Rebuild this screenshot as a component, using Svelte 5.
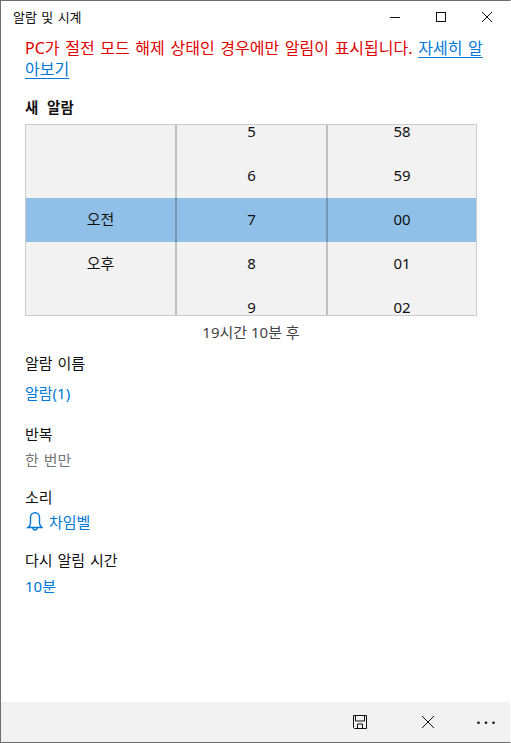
<script>
	const columns = [
		{name: 'ampm', items: ['', '', '오전', '오후', '']},
		{name: 'hour', items: ['5', '6', '7', '8', '9']},
		{name: 'minute', items: ['58', '59', '00', '01', '02']}
	]
</script>

<div class="window">
	<header class="titlebar">
		<span class="title">알람 및 시계</span>
		<div class="controls">
			<button aria-label="최소화">
				<svg width="10" height="10" viewBox="0 0 10 10"><path d="M0 5.5h10" stroke="#111" fill="none"/></svg>
			</button>
			<button aria-label="최대화">
				<svg width="10" height="10" viewBox="0 0 10 10"><rect x=".5" y=".5" width="9" height="9" stroke="#111" fill="none"/></svg>
			</button>
			<button aria-label="닫기">
				<svg width="10" height="10" viewBox="0 0 10 10"><path d="M0 0l10 10M10 0L0 10" stroke="#111" fill="none"/></svg>
			</button>
		</div>
	</header>

	<main class="content">
		<p class="notice">PC가 절전 모드 해제 상태인 경우에만 알림이 표시됩니다. <a href="#more">자세히 알아보기</a></p>

		<h2>새 알람</h2>

		<div class="picker">
			<div class="band"></div>
			{#each columns as col}
				<div class="col">
					{#each col.items as item}
						<div class="cell">{item}</div>
					{/each}
				</div>
			{/each}
		</div>
		<div class="remaining">19시간 10분 후</div>

		<div class="field name">
			<div class="label">알람 이름</div>
			<div class="value link">알람(1)</div>
		</div>
		<div class="field repeat">
			<div class="label">반복</div>
			<div class="value muted">한 번만</div>
		</div>
		<div class="field sound">
			<div class="label">소리</div>
			<div class="value link bell">
				<svg width="18" height="20" viewBox="0 0 18 20" fill="none" stroke="#0078d7" stroke-width="1.4">
					<path d="M3 15.500c1.500-1 2.500-2.500 2.500-4.500V5.200a4.500 4.500 0 0 1 9 0V11c0 2 1 3.500 2.500 4.500z"/>
					<path d="M8 15.500v.5a2 2 0 0 0 4 0v-.5"/>
				</svg>
				<span>차임벨</span>
			</div>
		</div>
		<div class="field snooze">
			<div class="label">다시 알림 시간</div>
			<div class="value link">10분</div>
		</div>
	</main>

	<footer class="commandbar">
		<button aria-label="저장">
			<svg width="16" height="16" viewBox="0 0 16 16" fill="none" stroke="#111">
				<path d="M1.500 1.500h13v13h-12l-1-1z"/>
				<path d="M3.500 1.500V7h9V1.500M5.500 14.500V10h5v4.500"/>
			</svg>
		</button>
		<button aria-label="취소">
			<svg width="16" height="16" viewBox="0 0 16 16" fill="none" stroke="#111"><path d="M2 2l12 12M14 2L2 14"/></svg>
		</button>
		<button class="more" aria-label="더 보기">
			<svg width="20" height="6" viewBox="0 0 20 6" fill="#111"><circle cx="2.500" cy="3.700" r="1.300"/><circle cx="10" cy="3.700" r="1.300"/><circle cx="17.500" cy="3.700" r="1.300"/></svg>
		</button>
	</footer>
</div>

<style>
	:global(body) {
		margin: 0;
		background: #fff;
	}

	.window {
		box-sizing: border-box;
		width: 511px;
		height: 743px;
		display: flex;
		flex-direction: column;
		border: 1px solid #6e6e6e;
		border-right-color: #fff;
		background: #fff;
		color: #111;
		font-family: "Noto Sans", "Noto Sans CJK KR", sans-serif;
		font-size: 15px;
		word-spacing: 1px;
	}

	button {
		border: 0;
		background: none;
		padding: 0;
		display: flex;
		align-items: center;
		justify-content: center;
	}

	.titlebar {
		height: 32px;
		flex: none;
		display: flex;
		align-items: center;
		justify-content: space-between;
		padding-left: 12px;
	}

	.title {
		font-size: 13px;
		padding-bottom: 2px;
	}

	.controls {
		display: flex;
	}

	.controls button {
		width: 46px;
		height: 32px;
	}

	.content {
		flex: 1;
		padding: 5px 33px 0 24px;
	}

	.notice {
		margin: 0 -8px 0 0;
		color: #e00000;
		font-size: 16px;
		word-spacing: 1.5px;
		line-height: 21px;
	}

	.notice a {
		color: #0078d7;
		text-decoration: underline 1px;
		text-underline-offset: 3px;
	}

	h2 {
		margin: 17px 0 0;
		font-size: 14.500px;
		font-weight: 700;
		word-spacing: 5px;
		line-height: 20px;
	}

	.picker {
		position: relative;
		box-sizing: border-box;
		height: 192px;
		margin-top: 7px;
		display: grid;
		grid-template-columns: 151px 151px 1fr;
		grid-template-rows: 190px;
		border: 1px solid #ccc;
		background: #f2f2f2;
		overflow: hidden;
	}

	.band {
		position: absolute;
		left: 0;
		right: 0;
		top: 73px;
		height: 44px;
		background: #90c0e8;
	}

	.col {
		position: relative;
		display: flex;
		flex-direction: column;
		justify-content: center;
		min-height: 0;
		border-right: 2px solid rgba(0, 0, 0, 0.2);
	}

	.col:last-child {
		border-right: 0;
	}

	.cell {
		flex: none;
		height: 44px;
		line-height: 42px;
		text-align: center;
	}

	.remaining {
		margin-top: 6px;
		text-align: center;
		color: #444;
		line-height: 20px;
		word-spacing: 0;
	}

	.label {
		line-height: 20px;
	}

	.value {
		line-height: 20px;
	}

	.link {
		color: #0078d7;
	}

	.muted {
		color: #767676;
	}

	.bell {
		display: flex;
		align-items: center;
		gap: 6px;
	}

	.field.name {
		margin-top: 11px;
	}

	.name .value {
		margin-top: 10px;
	}

	.repeat {
		margin-top: 21px;
	}

	.repeat .value {
		margin-top: 6px;
	}

	.sound {
		margin-top: 17px;
	}

	.sound .value {
		margin-top: 5px;
	}

	.snooze {
		margin-top: 18px;
	}

	.snooze .value {
		margin-top: 6px;
	}

	.commandbar {
		height: 40px;
		flex: none;
		display: flex;
		justify-content: flex-end;
		background: #f2f2f2;
	}

	.commandbar button {
		width: 68px;
		height: 40px;
	}

	.commandbar .more {
		width: 48px;
	}
</style>
